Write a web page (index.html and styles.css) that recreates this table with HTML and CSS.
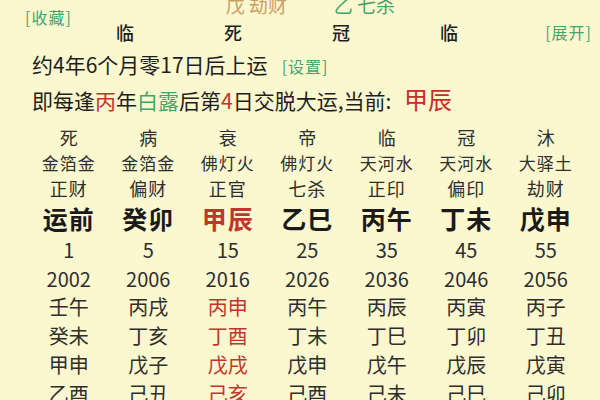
FILE: index.html
```html
<!DOCTYPE html>
<html lang="zh">
<head>
<meta charset="utf-8">
<link rel="stylesheet" href="styles.css">
</head>
<body>
<div class="page">
  <div class="pillars">
    <span class="fav green">[收藏]</span>
    <span class="top top-a tan">戊 劫财</span>
    <span class="top top-b green">乙 七杀</span>
    <span class="p">临</span>
    <span class="p">死</span>
    <span class="p">冠</span>
    <span class="p">临</span>
    <span class="expand green">[展开]</span>
  </div>
  <div class="line line1">约4年6个月零17日后上运<span class="link green">[设置]</span></div>
  <div class="line line2">即每逢<span class="red">丙</span>年<span class="green">白露</span>后第<span class="red">4</span>日交脱大运,当前: <span class="cur">甲辰</span></div>
  <div class="luck">
    <div class="row r-state"><span>死</span><span>病</span><span>衰</span><span>帝</span><span>临</span><span>冠</span><span>沐</span></div>
    <div class="row r-nayin"><span>金箔金</span><span>金箔金</span><span>佛灯火</span><span>佛灯火</span><span>天河水</span><span>天河水</span><span>大驿土</span></div>
    <div class="row r-god"><span>正财</span><span>偏财</span><span>正官</span><span>七杀</span><span>正印</span><span>偏印</span><span>劫财</span></div>
    <div class="row r-gz"><span>运前</span><span>癸卯</span><span class="red">甲辰</span><span>乙巳</span><span>丙午</span><span>丁未</span><span>戊申</span></div>
    <div class="row r-age"><span>1</span><span>5</span><span>15</span><span>25</span><span>35</span><span>45</span><span>55</span></div>
    <div class="row r-year"><span>2002</span><span>2006</span><span>2016</span><span>2026</span><span>2036</span><span>2046</span><span>2056</span></div>
    <div class="row r-yr"><span>壬午</span><span>丙戌</span><span class="red">丙申</span><span>丙午</span><span>丙辰</span><span>丙寅</span><span>丙子</span></div>
    <div class="row r-yr"><span>癸未</span><span>丁亥</span><span class="red">丁酉</span><span>丁未</span><span>丁巳</span><span>丁卯</span><span>丁丑</span></div>
    <div class="row r-yr"><span>甲申</span><span>戊子</span><span class="red">戊戌</span><span>戊申</span><span>戊午</span><span>戊辰</span><span>戊寅</span></div>
    <div class="row r-yr"><span>乙酉</span><span>己丑</span><span class="red">己亥</span><span>己酉</span><span>己未</span><span>己巳</span><span>己卯</span></div>
  </div>
</div>
</body>
</html>
```

FILE: styles.css
```css
html, body {
  margin: 0;
  padding: 0;
}
body {
  width: 600px;
  height: 400px;
  overflow: hidden;
  background: #fbf7cf;
  color: #2a2a2a;
  font-family: "Noto Sans CJK SC", "Noto Sans", sans-serif;
}
.green { color: #43a56c; }
.tan { color: #c8a163; }
.red { color: #c8302a; }

.pillars {
  display: grid;
  grid-template-columns: 71px repeat(4, 108px) 1fr;
  grid-template-rows: 20px 35px;
  margin-top: -5px;
}
.fav {
  grid-column: 1;
  grid-row: 1 / span 2;
  padding-left: 25px;
  margin-top: 12px;
  font-size: 16px;
  line-height: 20px;
  letter-spacing: 1px;
  white-space: nowrap;
}
.top {
  grid-row: 1;
  justify-self: end;
  font-size: 19px;
  line-height: 20px;
  white-space: nowrap;
}
.top-a { grid-column: 3; }
.top-b { grid-column: 4; }
.p {
  grid-row: 2;
  text-align: center;
  font-size: 18px;
  line-height: 35px;
  font-weight: 500;
  color: #1e1e1e;
}
.expand {
  grid-column: 6;
  grid-row: 2;
  justify-self: end;
  padding-right: 8px;
  font-size: 16px;
  line-height: 35px;
  letter-spacing: 1px;
  white-space: nowrap;
}
.line {
  margin-left: 32px;
  font-size: 21px;
  color: #1e1e1e;
  white-space: nowrap;
}
.line1 { line-height: 29px; }
.line2 { line-height: 35px; }
.link {
  font-size: 16px;
  margin-left: 14px;
  letter-spacing: 1px;
}
.cur {
  font-size: 24px;
  margin-left: 8px;
  color: #cc2a26;
}

.luck {
  margin-top: 6px;
  margin-left: 29px;
}
.row {
  display: grid;
  grid-template-columns: repeat(7, 79.5px);
  text-align: center;
  color: #2e2e2e;
}
.r-state { height: 26px; line-height: 26px; font-size: 18px; }
.r-nayin { height: 25px; line-height: 25px; font-size: 17px; letter-spacing: 1px; }
.r-god { height: 26px; line-height: 26px; font-size: 18px; letter-spacing: 1px; }
.r-gz { height: 34px; line-height: 34px; font-size: 25px; font-weight: bold; color: #1a1a1a; letter-spacing: 1px; }
.r-age { height: 30px; line-height: 30px; font-size: 20px; }
.r-year { height: 27px; line-height: 27px; font-size: 20px; }
.r-yr { height: 29px; line-height: 29px; font-size: 20px; }
.row .red { color: #c0362c; }
```
